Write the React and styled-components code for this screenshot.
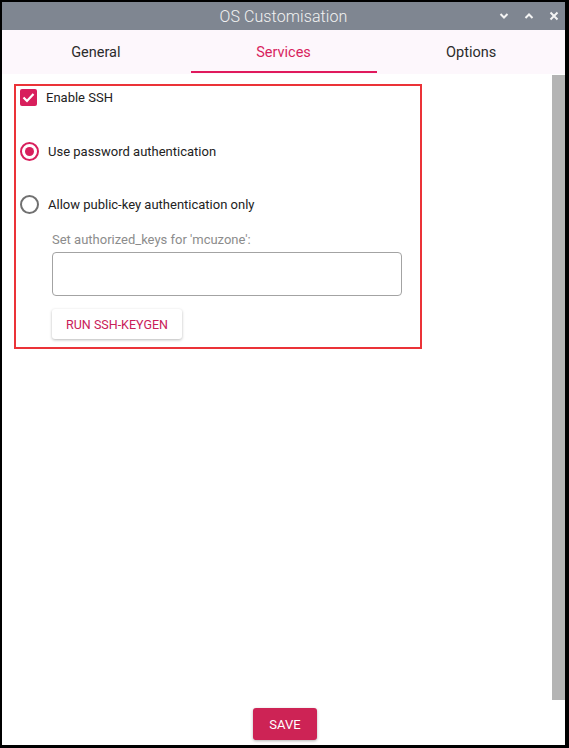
import React from "react";
import styled, { createGlobalStyle } from "styled-components";

const Global = createGlobalStyle`
  html, body { margin: 0; padding: 0; background: #000; }
  body { font-family: Roboto, "Liberation Sans", sans-serif; }
  * { box-sizing: border-box; }
`;

const Window = styled.div`
  margin: 2px 4px 3px 2px;
  height: 743px;
  display: flex;
  flex-direction: column;
  background: #fff;
`;

const TitleBar = styled.div`
  height: 28px;
  flex: none;
  background: #7f8691;
  position: relative;
  display: flex;
  align-items: center;
  justify-content: center;
`;

const Title = styled.div`
  color: #f2f2f2;
  font-size: 16px;
  font-weight: 300;
  letter-spacing: 0.1px;
`;

const WinButtons = styled.div`
  position: absolute;
  right: 6px;
  top: 0;
  height: 28px;
  display: flex;
  align-items: center;
  gap: 15px;
`;

const TabBar = styled.div`
  height: 44px;
  flex: none;
  background: #fdf7fc;
  display: grid;
  grid-template-columns: repeat(3, 1fr);
`;

const Tab = styled.div`
  position: relative;
  display: flex;
  align-items: center;
  justify-content: center;
  font-size: 14.5px;
  color: ${(p) => (p.$active ? "#d81f5e" : "#2b2b2b")};
  &::after {
    content: "";
    display: ${(p) => (p.$active ? "block" : "none")};
    position: absolute;
    left: 1px;
    right: 0;
    bottom: 1px;
    height: 2px;
    background: #e0195c;
  }
`;

const Body = styled.div`
  flex: 1;
  display: flex;
  min-height: 0;
`;

const Main = styled.div`
  flex: 1;
  padding: 10px 0 0 12px;
`;

const ScrollBar = styled.div`
  width: 13px;
  flex: none;
  background: #b4b4b4;
  margin-top: 1px;
`;

const Highlight = styled.div`
  width: 408px;
  border: 2px solid #eb3338;
  padding: 1px 4px 8px 4px;
  display: flex;
  flex-direction: column;
`;

const OptionRow = styled.label`
  display: flex;
  align-items: center;
  height: 20px;
  margin-top: ${(p) => p.$mt || 0}px;
  gap: 9px;
  font-size: 13px;
  color: #222;
`;

const CheckBox = styled.span`
  width: 17px;
  height: 17px;
  border-radius: 2px;
  background: #d81f5c;
  display: flex;
  align-items: center;
  justify-content: center;
`;

const Radio = styled.span`
  width: 19px;
  height: 19px;
  border-radius: 50%;
  border: 2px solid ${(p) => (p.$on ? "#d81f5c" : "#707070")};
  display: flex;
  align-items: center;
  justify-content: center;
  &::after {
    content: "";
    display: ${(p) => (p.$on ? "block" : "none")};
    width: 9px;
    height: 9px;
    border-radius: 50%;
    background: #d81f5c;
  }
`;

const Indented = styled.div`
  padding-left: 32px;
  display: flex;
  flex-direction: column;
  align-items: flex-start;
`;

const FieldLabel = styled.div`
  margin-top: 18px;
  height: 16px;
  line-height: 16px;
  font-size: 13px;
  color: #8c8c8c;
`;

const TextArea = styled.div`
  margin-top: 4px;
  width: 350px;
  height: 44px;
  border: 1px solid #a3a3a3;
  border-radius: 4px;
  background: #fff;
`;

const KeygenButton = styled.button`
  margin-top: 13px;
  height: 30px;
  width: 130px;
  padding: 0;
  border: none;
  border-radius: 3px;
  background: #fff;
  box-shadow: 0 1px 3px rgba(0, 0, 0, 0.28);
  font-family: inherit;
  font-size: 12.5px;
  font-weight: 400;
  color: #c92058;
`;

const Footer = styled.div`
  height: 45px;
  flex: none;
  display: flex;
  justify-content: center;
  padding-top: 8px;
  padding-left: 3px;
`;

const SaveButton = styled.button`
  width: 64px;
  height: 32px;
  border: none;
  border-radius: 3px;
  background: #cd2355;
  color: #fff;
  font-family: inherit;
  font-size: 13px;
  box-shadow: 0 1px 3px rgba(0, 0, 0, 0.3);
`;

const Chevron = ({ up }) => (
  <svg width="10" height="8" viewBox="0 0 10 8">
    <path
      d={up ? "M1.5 6 L5 2.5 L8.5 6" : "M1.5 2 L5 5.5 L8.5 2"}
      fill="none"
      stroke="#f4f4f4"
      strokeWidth="2"
    />
  </svg>
);

const Close = () => (
  <svg width="10" height="10" viewBox="0 0 10 10">
    <path d="M1.5 1.5 L8.5 8.5 M8.5 1.5 L1.5 8.5" stroke="#f4f4f4" strokeWidth="2" />
  </svg>
);

export default function App() {
  return (
    <>
      <Global />
      <Window>
        <TitleBar>
          <Title>OS Customisation</Title>
          <WinButtons>
            <Chevron />
            <Chevron up />
            <Close />
          </WinButtons>
        </TitleBar>
        <TabBar>
          <Tab>General</Tab>
          <Tab $active>Services</Tab>
          <Tab>Options</Tab>
        </TabBar>
        <Body>
          <Main>
            <Highlight>
              <OptionRow>
                <CheckBox>
                  <svg width="13" height="11" viewBox="0 0 13 11">
                    <path d="M1.5 5.5 L5 9 L11.5 2" fill="none" stroke="#fff" strokeWidth="2.2" />
                  </svg>
                </CheckBox>
                Enable SSH
              </OptionRow>
              <OptionRow $mt={34}>
                <Radio $on />
                Use password authentication
              </OptionRow>
              <OptionRow $mt={33}>
                <Radio />
                Allow public-key authentication only
              </OptionRow>
              <Indented>
                <FieldLabel>Set authorized_keys for 'mcuzone':</FieldLabel>
                <TextArea />
                <KeygenButton>RUN SSH-KEYGEN</KeygenButton>
              </Indented>
            </Highlight>
          </Main>
          <ScrollBar />
        </Body>
        <Footer>
          <SaveButton>SAVE</SaveButton>
        </Footer>
      </Window>
    </>
  );
}
